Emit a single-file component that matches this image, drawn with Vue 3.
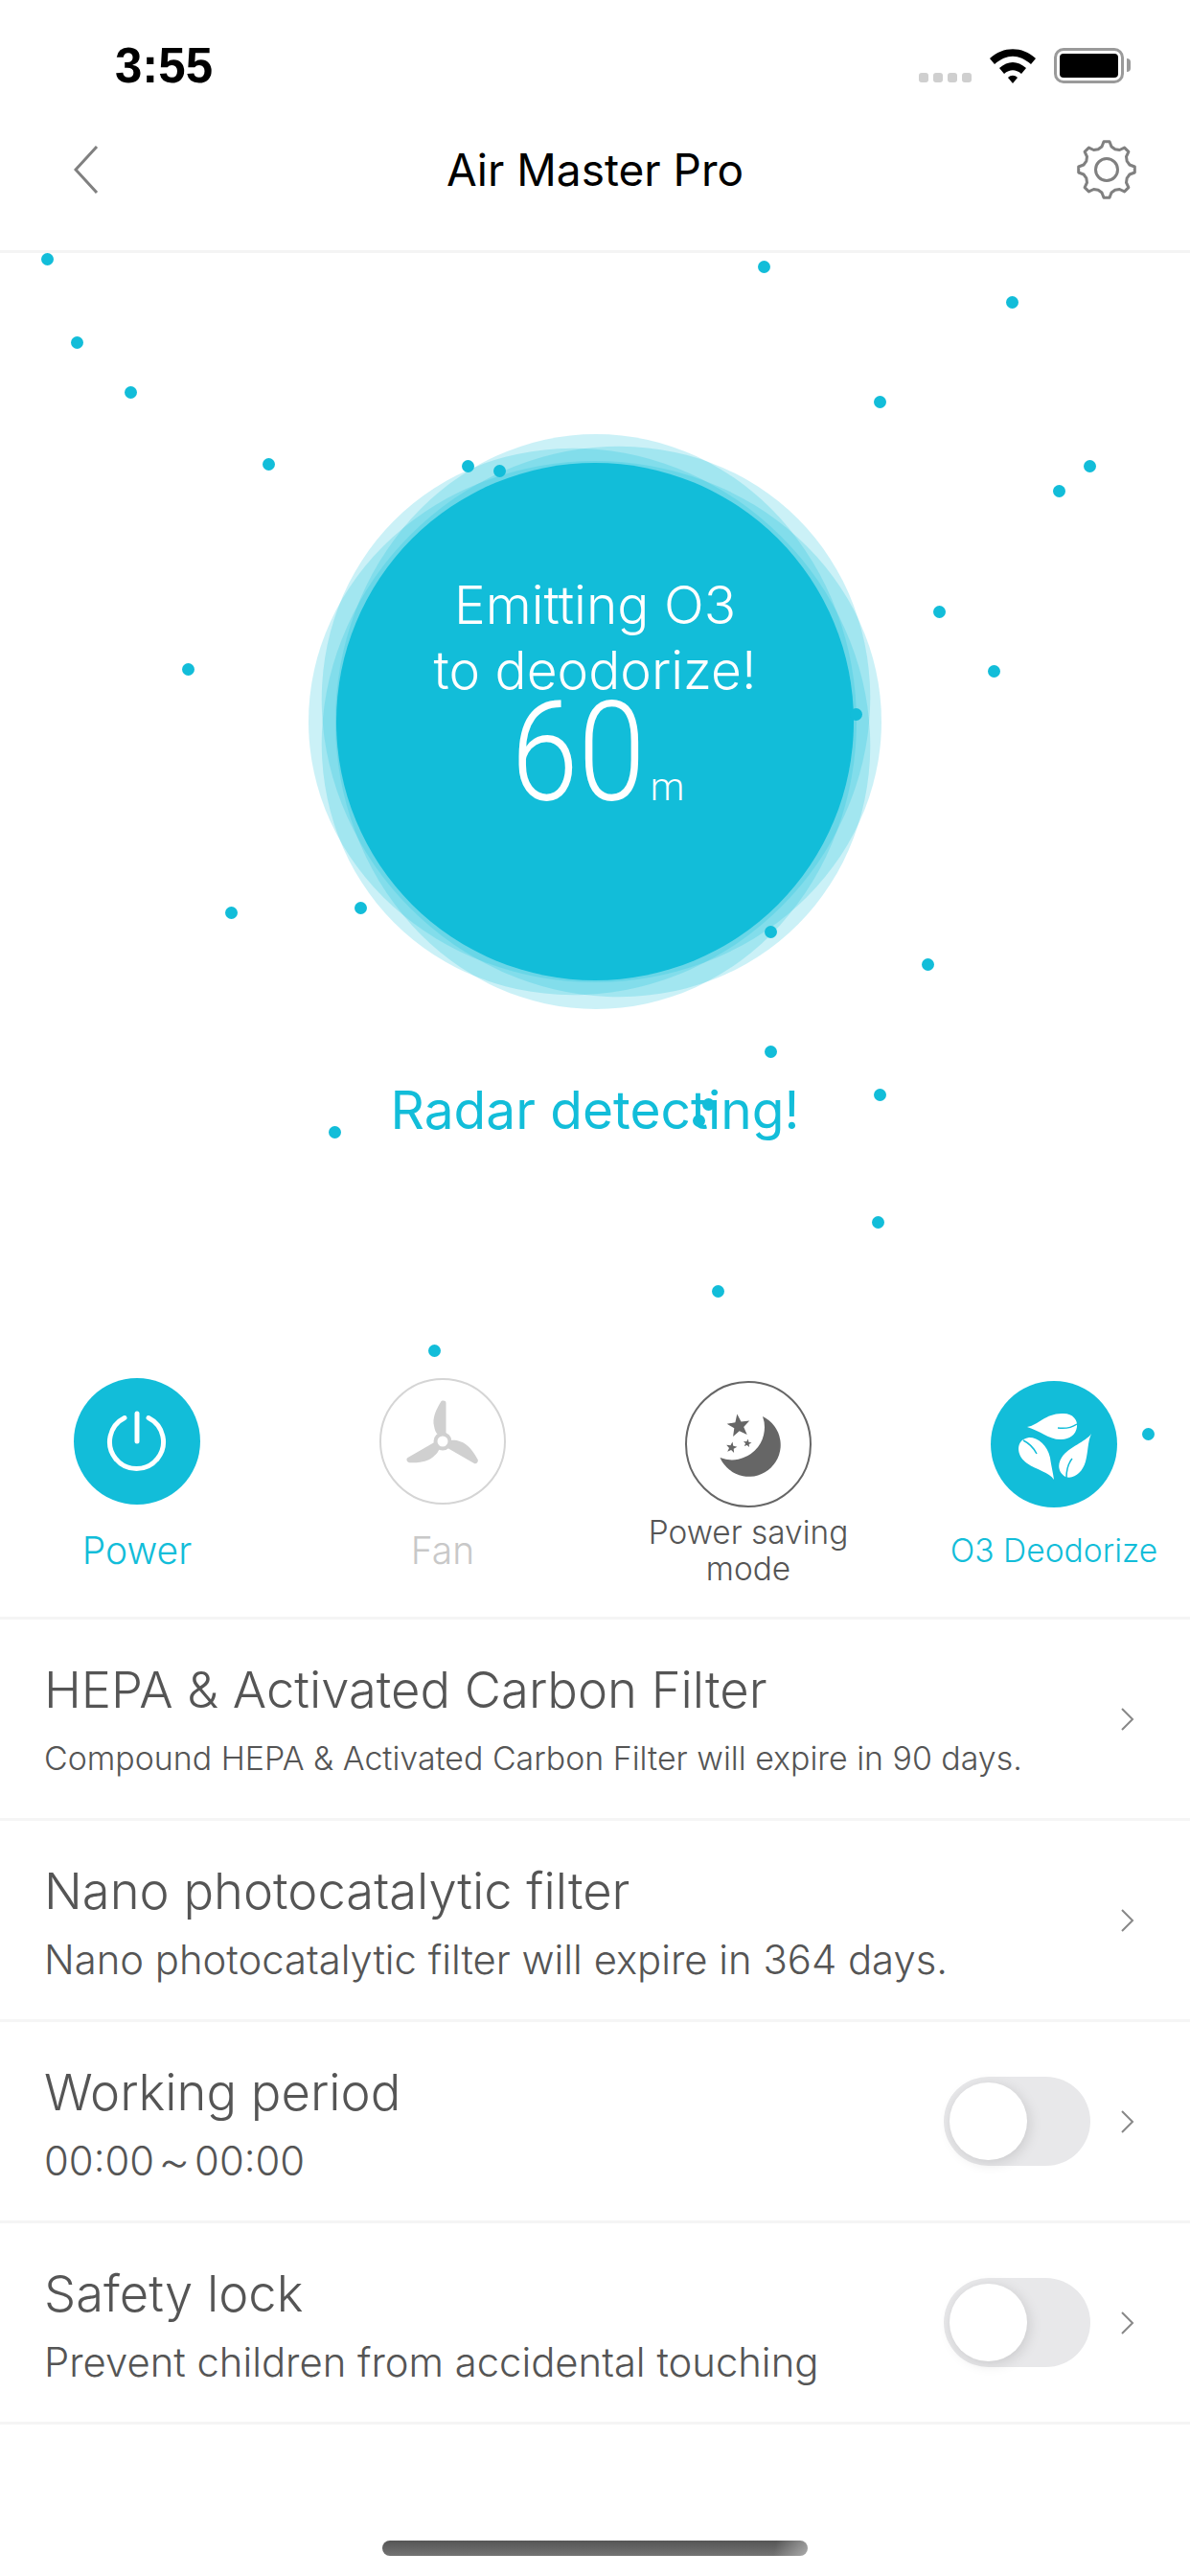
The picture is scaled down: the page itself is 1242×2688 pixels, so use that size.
<template>
  <div class="page">
    <div class="status">
      <span class="time">3:55</span>
      <div class="status-icons">
        <div class="signal"><i></i><i></i><i></i><i></i></div>
        <svg width="48" height="36" viewBox="0 0 48 36">
          <path d="M0 10C14 -3 34 -3 48 10L43 16C30 5 18 5 5 16Z" fill="#000" />
          <path d="M10 20C19 12 29 12 38 20L33 26C27 21 21 21 15 26Z" fill="#000" />
          <path d="M19 30C22 27 26 27 29 30L24 36Z" fill="#000" />
        </svg>
        <div class="battery"><div class="battery-fill"></div></div>
      </div>
    </div>

    <div class="nav">
      <svg class="nav-back" width="26" height="50" viewBox="0 0 26 50">
        <path d="M24 1L2 25L24 49" fill="none" stroke="#808080" stroke-width="3" />
      </svg>
      <span class="nav-title">Air Master Pro</span>
      <svg class="nav-gear" width="62" height="62" viewBox="-1 -1 62 62">
        <path :d="gearPath" fill="none" stroke="#808080" stroke-width="3" stroke-linejoin="round" />
        <circle cx="30" cy="30" r="11.500" fill="none" stroke="#808080" stroke-width="3" />
      </svg>
    </div>

    <div class="main">
      <div class="stage">
        <div class="bubble">
          <svg class="bubble-waves" width="610" height="610" viewBox="0 0 610 610">
            <ellipse cx="306" cy="305" rx="300" ry="272" transform="rotate(90 306 305)" class="wave" />
            <ellipse cx="305" cy="305" rx="299" ry="272" class="wave" />
            <ellipse cx="306" cy="306" rx="298" ry="274" transform="rotate(45 306 306)" class="wave" />
            <ellipse cx="306" cy="304" rx="298" ry="274" transform="rotate(-45 306 304)" class="wave" />
          </svg>
          <div class="bubble-core">
            <p class="bubble-text">Emitting O3<br />to deodorize!</p>
            <p class="bubble-timer"><span class="bubble-digits">60</span><span class="bubble-unit">m</span></p>
          </div>
        </div>
        <p class="radar">Radar detecting!</p>
      </div>

      <div class="controls">
        <div v-for="item in controls" :key="item.label" class="control" :class="item.kind">
          <div class="control-circle">
            <svg v-if="item.icon === 'power'" width="70" height="70" viewBox="-35 -35 70 70">
              <path d="M-13 -24.500A28 28 0 1 0 12 -24.500" fill="none" stroke="#fff" stroke-width="5" stroke-linecap="round" />
              <path d="M0 -29V0" fill="none" stroke="#fff" stroke-width="5" stroke-linecap="round" />
            </svg>
            <svg v-else-if="item.icon === 'fan'" width="88" height="88" viewBox="-44 -44 88 88">
              <g fill="#d0d0d0">
                <path v-for="angle in [0, 120, 240]" :key="angle" :d="bladePath" :transform="`rotate(${angle})`" />
              </g>
              <circle r="7.500" fill="#fff" stroke="#d0d0d0" stroke-width="4" />
            </svg>
            <svg v-else-if="item.icon === 'moon'" width="100" height="100" viewBox="21 21 100 100">
              <path d="M86 42A33 33 0 1 1 41.500 85A34 34 0 0 0 86 42Z" fill="#666" />
              <path :d="star(61, 52, 12.500, -8)" fill="#666" />
              <path :d="star(53.500, 74.500, 6, 10)" fill="#666" />
              <path :d="star(70, 70, 4.500, 10)" fill="#666" />
            </svg>
            <svg v-else width="100" height="100" viewBox="20 20 100 100">
              <path d="M42 52C54 50 62 37 80 38C90 38 95 45 94 52C93 60 86 65 78 65C66 66 56 56 42 52Z" fill="#fff" />
              <path d="M74 53C81 54 88 53 94 49" fill="none" stroke="#12bdd9" stroke-width="1.500" />
              <path d="M70 107C65 99 52 97 42 90C33 84 31 74 35 68C37 65 40 64 44 63C54 63 63 71 66 84C67 92 69 99 70 107Z" fill="#fff" />
              <path d="M38 66C44 69 49 74 52 80" fill="none" stroke="#12bdd9" stroke-width="1.500" />
              <path d="M109 59C103 68 86 72 78 84C73 92 75 100 82 104C91 107 100 99 103 88C106 77 105 68 109 59Z" fill="#fff" />
              <path d="M83 105C83 97 85 90 89 85" fill="none" stroke="#12bdd9" stroke-width="1.500" />
            </svg>
          </div>
          <span class="control-label">{{ item.label }}</span>
        </div>
      </div>

      <span
        v-for="(dot, index) in dots"
        :key="index"
        class="dot"
        :style="{ left: dot[0] + 'px', top: dot[1] + 'px' }"
      ></span>
    </div>

    <div class="rows">
      <div v-for="row in rows" :key="row.title" class="row">
        <div class="row-text">
          <div class="row-title">{{ row.title }}</div>
          <div class="row-sub" :class="{ small: row.small }">{{ row.sub }}</div>
        </div>
        <div v-if="row.toggle" class="toggle"><div class="toggle-knob"></div></div>
        <svg class="row-arrow" width="14" height="24" viewBox="0 0 14 24">
          <path d="M1 1L12 12L1 23" fill="none" stroke="#888" stroke-width="2" />
        </svg>
      </div>
    </div>

    <div class="home-bar"></div>
  </div>
</template>

<script setup>
const controls = [
  { label: "Power", icon: "power", kind: "on" },
  { label: "Fan", icon: "fan", kind: "off" },
  { label: "Power saving mode", icon: "moon", kind: "dark" },
  { label: "O3 Deodorize", icon: "leaf", kind: "on raised" },
];

const rows = [
  {
    title: "HEPA & Activated Carbon Filter",
    sub: "Compound HEPA & Activated Carbon Filter will expire in 90 days.",
    small: true,
  },
  { title: "Nano photocatalytic filter", sub: "Nano photocatalytic filter will expire in 364 days." },
  { title: "Working period", sub: "00:00～00:00", toggle: true },
  { title: "Safety lock", sub: "Prevent children from accidental touching", toggle: true },
];

// particle positions, relative to .main (which starts at y=264)
const dots = [
  [43, 0], [74, 87], [130, 139], [274, 214], [482, 216], [515, 221], [791, 8], [1050, 45],
  [912, 149], [1131, 216], [1099, 242], [974, 368], [1031, 430], [190, 428], [235, 682],
  [370, 677], [798, 702], [962, 736], [798, 827], [912, 872], [733, 882], [723, 899],
  [343, 911], [910, 1005], [743, 1077], [447, 1139], [1192, 1226], [887, 475],
];

const bladePath = "M3.5 -6L3.5 -40C3.5 -43 -1 -43 -2 -41C-7 -33 -11 -24 -9 -16C-8 -11 -7 -9 -5 -7Z";

// five pointed star around cx,cy
function star(cx, cy, r, rotation) {
  let d = "";
  for (let i = 0; i < 10; i++) {
    const radius = i % 2 ? r * 0.42 : r;
    const t = ((rotation + i * 36 - 90) * Math.PI) / 180;
    d += (i ? "L" : "M") + (cx + radius * Math.cos(t)).toFixed(1) + " " + (cy + radius * Math.sin(t)).toFixed(1);
  }
  return d + "Z";
}

// gear outline with 8 rounded teeth
const gearPath = (() => {
  let d = "";
  const teeth = 8;
  const step = (Math.PI * 2) / teeth;
  for (let i = 0; i < teeth; i++) {
    const a = i * step - Math.PI / 2;
    const pts = [
      [23, a - step * 0.5],
      [24.5, a - step * 0.26],
      [29.5, a - step * 0.13],
      [29.5, a + step * 0.13],
      [24.5, a + step * 0.26],
    ];
    pts.forEach(([r, t], j) => {
      const x = (30 + r * Math.cos(t)).toFixed(1);
      const y = (30 + r * Math.sin(t)).toFixed(1);
      d += (i === 0 && j === 0 ? "M" : "L") + x + " " + y;
    });
  }
  return d + "Z";
})();
</script>

<style>
body {
  margin: 0;
  background: #fff;
}
</style>

<style scoped>
.page {
  position: relative;
  width: 1242px;
  height: 2688px;
  overflow: hidden;
  background: #fff;
  font-family: Inter, Roboto, sans-serif;
}

.status {
  height: 124px;
  padding: 6px 62px 0 120px;
  display: flex;
  justify-content: space-between;
  align-items: center;
}

.time {
  font-family: "Liberation Sans", sans-serif;
  font-weight: 700;
  font-size: 51px;
  color: #000;
}

.status-icons {
  display: flex;
  align-items: flex-end;
  gap: 19px;
}

.signal {
  display: flex;
  gap: 5px;
  margin-bottom: 1px;
}

.signal i {
  width: 10px;
  height: 10px;
  border-radius: 3px;
  background: #cfcfcf;
}

.battery {
  position: relative;
  width: 73px;
  height: 37px;
  box-sizing: border-box;
  border: 3px solid #9a9a9a;
  border-radius: 10px;
  padding: 3px;
  margin-right: 7px;
}

.battery::after {
  content: "";
  position: absolute;
  right: -10px;
  top: 8px;
  width: 4px;
  height: 14px;
  border-radius: 0 4px 4px 0;
  background: #9a9a9a;
}

.battery-fill {
  height: 100%;
  background: #000;
  border-radius: 4px;
}

.nav {
  height: 94px;
  padding: 0 56px 37px;
  display: grid;
  grid-template-columns: 1fr auto 1fr;
  align-items: center;
  border-bottom: 3px solid #f4f4f4;
}

.nav-back {
  margin-left: 21px;
}

.nav-title {
  font-size: 46px;
  font-weight: 400;
  color: #000;
}

.nav-gear {
  justify-self: end;
}

.main {
  position: relative;
  height: 1423px;
}

.stage {
  height: 1174px;
  display: flex;
  flex-direction: column;
  align-items: center;
  padding-top: 184px;
  box-sizing: border-box;
}

.bubble {
  position: relative;
  width: 610px;
  height: 610px;
  display: flex;
  align-items: center;
  justify-content: center;
}

.bubble-waves {
  position: absolute;
  left: 0;
  top: 0;
}

.wave {
  fill: #12bdd9;
  opacity: 0.22;
}

.bubble-core {
  position: relative;
  width: 540px;
  height: 540px;
  box-sizing: border-box;
  padding-top: 114px;
  border-radius: 50%;
  background: #12bdd9;
  color: #fff;
  text-align: center;
}

.bubble-text {
  margin: 0;
  font-size: 55px;
  font-weight: 300;
  line-height: 68px;
}

.bubble-timer {
  margin: -3px 0 0;
  display: flex;
  justify-content: center;
  align-items: baseline;
  font-family: Roboto, sans-serif;
  font-weight: 300;
  line-height: 110px;
  padding-left: 6px;
}

.bubble-digits {
  font-size: 145px;
  transform: scaleX(0.87);
  margin: 0 -11px;
}

.bubble-unit {
  font-size: 40px;
  margin-left: 6px;
}

.radar {
  margin: 68px 0 0;
  font-size: 55px;
  font-weight: 400;
  line-height: 64px;
  color: #12bdd9;
}

.controls {
  display: flex;
  justify-content: space-between;
  padding: 0 76px 0 77px;
}

.control {
  width: 132px;
  display: flex;
  flex-direction: column;
  align-items: center;
}

.control-circle {
  width: 132px;
  height: 132px;
  box-sizing: border-box;
  border-radius: 50%;
  display: flex;
  align-items: center;
  justify-content: center;
  flex-shrink: 0;
}

.control-label {
  width: 300px;
  margin-top: 28px;
  font-size: 39px;
  font-weight: 300;
  line-height: 39px;
  text-align: center;
}

.on .control-circle {
  background: #12bdd9;
}

.on .control-label {
  color: #12bdd9;
}

.off .control-circle {
  border: 2px solid #d5d5d5;
}

.off .control-label {
  color: #c8c8c8;
}

.dark .control-circle {
  border: 2px solid #666;
}

.dark,
.raised {
  padding-top: 3px;
}

.dark .control-label {
  width: 220px;
  margin-top: 7px;
  font-size: 33.4px;
  line-height: 38px;
  color: #555;
}

.raised .control-label {
  margin-top: 25px;
  font-size: 33.6px;
}

.dot {
  position: absolute;
  width: 13px;
  height: 13px;
  border-radius: 50%;
  background: #12bdd9;
}

.rows {
  display: flex;
  flex-direction: column;
}

.row {
  height: 207px;
  display: flex;
  align-items: center;
  padding: 0 58px 0 46px;
  border-top: 3px solid #f5f5f5;
}

.row:last-child {
  border-bottom: 3px solid #f5f5f5;
}

.row-text {
  flex: 1;
  padding-top: 10px;
}

.row-title {
  font-size: 52.500px;
  font-weight: 300;
  line-height: 72px;
  color: #555;
}

.row-sub {
  font-size: 41.800px;
  font-weight: 300;
  line-height: 72px;
  color: #555;
}

.row-sub.small {
  font-size: 33.900px;
}

.row-arrow {
  flex-shrink: 0;
  margin-left: 32px;
}

.toggle {
  width: 153px;
  height: 93px;
  flex-shrink: 0;
  box-sizing: border-box;
  padding: 6px;
  border-radius: 47px;
  background: #e8e8ea;
}

.toggle-knob {
  width: 81px;
  height: 81px;
  border-radius: 50%;
  background: #fff;
  box-shadow: 2px 3px 14px rgba(0, 0, 0, 0.13);
}

.home-bar {
  position: absolute;
  left: 399px;
  bottom: 21px;
  width: 444px;
  height: 16px;
  border-radius: 8px;
  background: linear-gradient(100deg, transparent 92%, rgba(255, 255, 255, 0.4)), linear-gradient(#555, #737373);
}
</style>
